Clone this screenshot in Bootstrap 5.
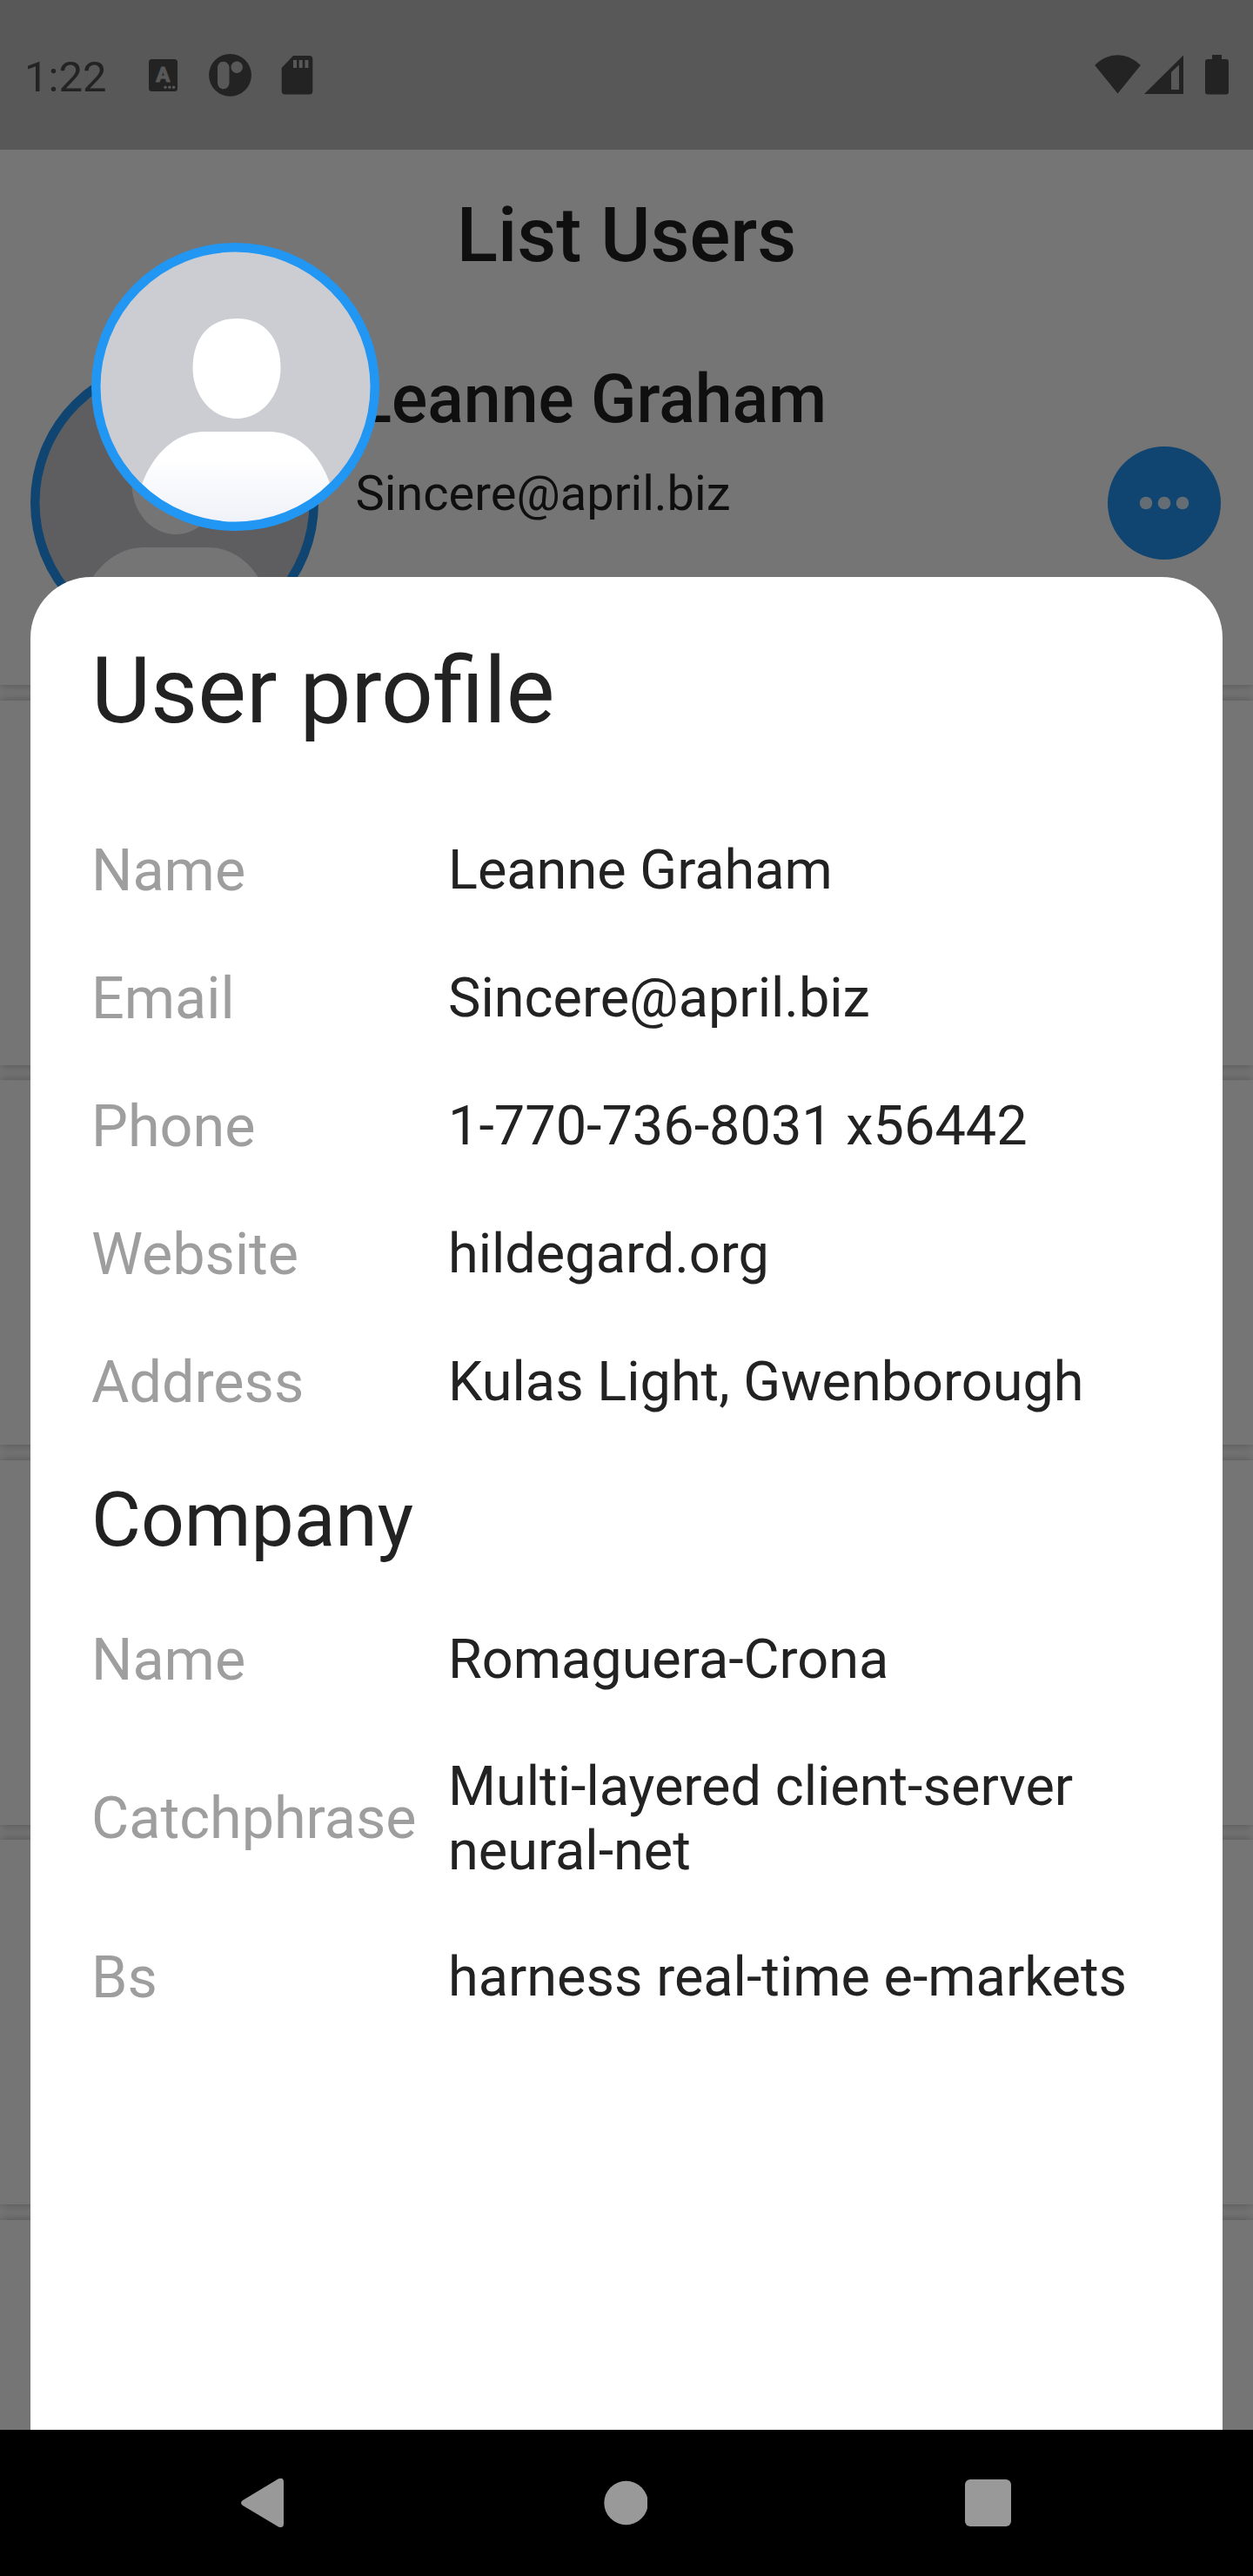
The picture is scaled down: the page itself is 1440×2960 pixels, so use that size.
<!DOCTYPE html>
<html lang="en">
<head>
<meta charset="utf-8">
<meta name="viewport" content="width=device-width, initial-scale=1">
<title>List Users</title>
<link href="https://cdn.jsdelivr.net/npm/bootstrap@5.3.0/dist/css/bootstrap.min.css" rel="stylesheet">
<style>
  body { font-family: Roboto, "Noto Sans", sans-serif; color: #222; background: #000; line-height: 1.172; }
  svg { display: block; flex: none; }
  .phone { width: 1440px; height: 2960px; }
  .screen { height: 2792px; background: #fff; }
  .status-bar { flex: none; height: 172px; background: #bfbfbf; color: #4c4c4c; padding: 61px 27px 0 28px; }
  .status-time { font-size: 49px; line-height: 58px; width: 143px; margin-top: -1px; }
  .ico-vendor { margin-left: 36px; }
  .ico-card { margin-left: 34px; }
  .ico-battery { margin-left: 25px; }
  .app-bar { flex: none; height: 196px; font-size: 87.5px; font-weight: 500; background: #fff; z-index: 1; }
  .user-list { gap: 17.5px; }
  .user-card { height: 419px; padding: 0 37px 0 35px; border: 0; border-radius: 0; box-shadow: 0 0 12px rgba(0,0,0,.32); color: #222; flex: none; }
  .user-text { padding: 45.5px 0 0 42.5px; }
  .user-name { font-size: 77px; font-weight: 500; line-height: 90px; }
  .user-mail { font-size: 56px; line-height: 66px; margin-top: 30px; }
  .btn-more { width: 130px; height: 130px; background: #2196f3; }
  .scrim { background: rgba(0,0,0,.54); z-index: 2; }
  .sheet { margin: 0 35px; top: 662.7px; padding: 70px; border-radius: 70px 70px 0 0; z-index: 3; }
  .sheet-avatar { left: 105px; top: 279px; z-index: 3; }
  .sheet-title { font-size: 105px; line-height: 124px; font-weight: 400; margin: 0 0 105px; }
  .sheet-subtitle { font-size: 87.5px; line-height: 103px; font-weight: 400; margin: -2px 0 71px; }
  .info { margin-bottom: 70px; min-height: 77px; }
  .info dt { font-size: 66.5px; line-height: 77px; font-weight: 400; color: #9e9e9e; white-space: nowrap; }
  .info dd { font-size: 63px; line-height: 74px; margin: 0; }
  .nav-keys { height: 168px; padding: 0 278px 0 275px; background: #000; }
</style>
<script src="https://cdn.jsdelivr.net/npm/bootstrap@5.3.0/dist/js/bootstrap.bundle.min.js"></script>
</head>
<body>
<svg width="0" height="0" class="position-absolute">
  <defs>
    <linearGradient id="torso" x1="0" y1="217" x2="0" y2="331" gradientUnits="userSpaceOnUse">
      <stop offset="0.25" stop-color="#fff"/><stop offset="1" stop-color="#eef0f8"/>
    </linearGradient>
    <clipPath id="disc"><circle cx="165.5" cy="165.5" r="156"/></clipPath>
    <symbol id="avatar" viewBox="0 0 331 331">
      <circle cx="165.5" cy="165.5" r="160" fill="#cccdd3"/>
      <g clip-path="url(#disc)">
        <path d="M167 87C200 87 217.500 111 217.500 144C217.500 175 196 202 167 202C138 202 116.500 175 116.500 144C116.500 111 134 87 167 87Z" fill="#fff"/>
        <path d="M52 331V300C60 255 90 217 130 217H204C243 217 272 252 280 300V331Z" fill="url(#torso)"/>
      </g>
      <circle cx="165.500" cy="165.500" r="160.250" fill="none" stroke="#2196f3" stroke-width="10.500"/>
    </symbol>
  </defs>
</svg>
<div class="phone d-flex flex-column">
  <div class="screen position-relative overflow-hidden d-flex flex-column">
    <header class="status-bar d-flex align-items-start">
      <div class="status-time">1:22</div>
      <svg width="33" height="50" viewBox="0 0 33 50" fill="currentColor">
        <rect y="7" width="33" height="37" rx="3.500"/>
        <text x="16.400" y="33.300" text-anchor="middle" font-family="Roboto" font-weight="700" font-size="24" fill="#bfbfbf" stroke="#bfbfbf" stroke-width="1" stroke-linejoin="round">A</text>
        <g fill="#bfbfbf"><circle cx="19" cy="39.300" r="1.700"/><circle cx="23.800" cy="39.300" r="1.700"/><circle cx="28.600" cy="39.300" r="1.700"/></g>
      </svg>
      <svg class="ico-vendor" width="49" height="50" viewBox="0 0 49 50" fill="currentColor">
        <circle cx="24.500" cy="25.300" r="24.400"/>
        <rect x="10" y="9.700" width="13.500" height="31.500" rx="6.700" fill="#bfbfbf"/><circle cx="32.200" cy="16.300" r="6.700" fill="#bfbfbf"/>
      </svg>
      <svg class="ico-card" width="37" height="50" viewBox="0 0 37 50" fill="currentColor">
        <path d="M14 3H32.500Q36.300 3 36.300 7V43.500Q36.300 47.500 32.500 47.500H4.500Q.700 47.500 .700 43.500V17Z"/>
        <path d="M14 8h4v9h-4zM20.700 8h4v9h-4zM27.400 8h4v9h-4z" fill="#bfbfbf"/>
      </svg>
      <svg class="ms-auto" width="53" height="50" viewBox="0 0 53 50" fill="currentColor"><path d="M26.500 46.500L.200 14Q12 2.200 26.500 2.200T52.800 14Z"/></svg>
      <svg class="ms-1" width="45" height="50" viewBox="0 0 45 50" fill="currentColor"><path fill-rule="evenodd" d="M0 47L45 2.500V47ZM31 22V42H40V13.500Z"/></svg>
      <svg class="ico-battery" width="28" height="50" viewBox="0 0 28 50" fill="currentColor"><path d="M8 2H19V7H24Q27 7 27 10V44.500Q27 47.500 24 47.500H3Q0 47.500 0 44.500V10Q0 7 3 7H8Z"/></svg>
    </header>
    <div class="app-bar d-flex align-items-center justify-content-center">List Users</div>
    <main class="user-list d-flex flex-column">
      <article class="user-card card flex-row align-items-center">
        <svg width="331" height="331"><use href="#avatar"/></svg>
        <div class="user-text flex-grow-1 align-self-start">
          <div class="user-name">Leanne Graham</div>
          <div class="user-mail">Sincere@april.biz</div>
        </div>
        <div class="btn-more rounded-circle d-flex align-items-center justify-content-center">
          <svg width="58" height="16" viewBox="0 0 58 16" fill="#fff" fill-opacity=".84"><circle cx="8" cy="8" r="7.300"/><circle cx="29" cy="8" r="7.300"/><circle cx="50" cy="8" r="7.300"/></svg>
        </div>
      </article>
      <article class="user-card card"></article>
      <article class="user-card card"></article>
      <article class="user-card card"></article>
      <article class="user-card card"></article>
      <article class="user-card card"></article>
    </main>
    <div class="scrim position-absolute top-0 start-0 w-100 h-100"></div>
    <section class="sheet bg-white position-absolute start-0 end-0 bottom-0">
      <h1 class="sheet-title">User profile</h1>
      <dl class="m-0">
        <div class="info row g-0 align-items-center"><dt class="col-4">Name</dt><dd class="col-8">Leanne Graham</dd></div>
        <div class="info row g-0 align-items-center"><dt class="col-4">Email</dt><dd class="col-8">Sincere@april.biz</dd></div>
        <div class="info row g-0 align-items-center"><dt class="col-4">Phone</dt><dd class="col-8">1-770-736-8031 x56442</dd></div>
        <div class="info row g-0 align-items-center"><dt class="col-4">Website</dt><dd class="col-8">hildegard.org</dd></div>
        <div class="info row g-0 align-items-center"><dt class="col-4">Address</dt><dd class="col-8">Kulas Light, Gwenborough</dd></div>
      </dl>
      <h2 class="sheet-subtitle">Company</h2>
      <dl class="m-0">
        <div class="info row g-0 align-items-center"><dt class="col-4">Name</dt><dd class="col-8">Romaguera-Crona</dd></div>
        <div class="info row g-0 align-items-center"><dt class="col-4">Catchphrase</dt><dd class="col-8">Multi-layered client-server neural-net</dd></div>
        <div class="info row g-0 align-items-center"><dt class="col-4">Bs</dt><dd class="col-8">harness real-time e-markets</dd></div>
      </dl>
    </section>
    <svg class="sheet-avatar position-absolute" width="331" height="331"><use href="#avatar"/></svg>
  </div>
  <nav class="nav-keys d-flex align-items-center justify-content-between">
    <svg width="52" height="58" viewBox="0 0 52 58" fill="#999"><path d="M4 26L45 1.300Q51 -.500 51 5V53Q51 58.500 45 56.500L4 32Q0 29 4 26Z"/></svg>
    <svg width="52" height="52" viewBox="0 0 52 52" fill="#999"><circle cx="27.500" cy="26" r="25.200"/></svg>
    <svg width="53" height="54" viewBox="0 0 53 54" fill="#999"><rect width="53" height="54" rx="6"/></svg>
  </nav>
</div>
</body>
</html>
